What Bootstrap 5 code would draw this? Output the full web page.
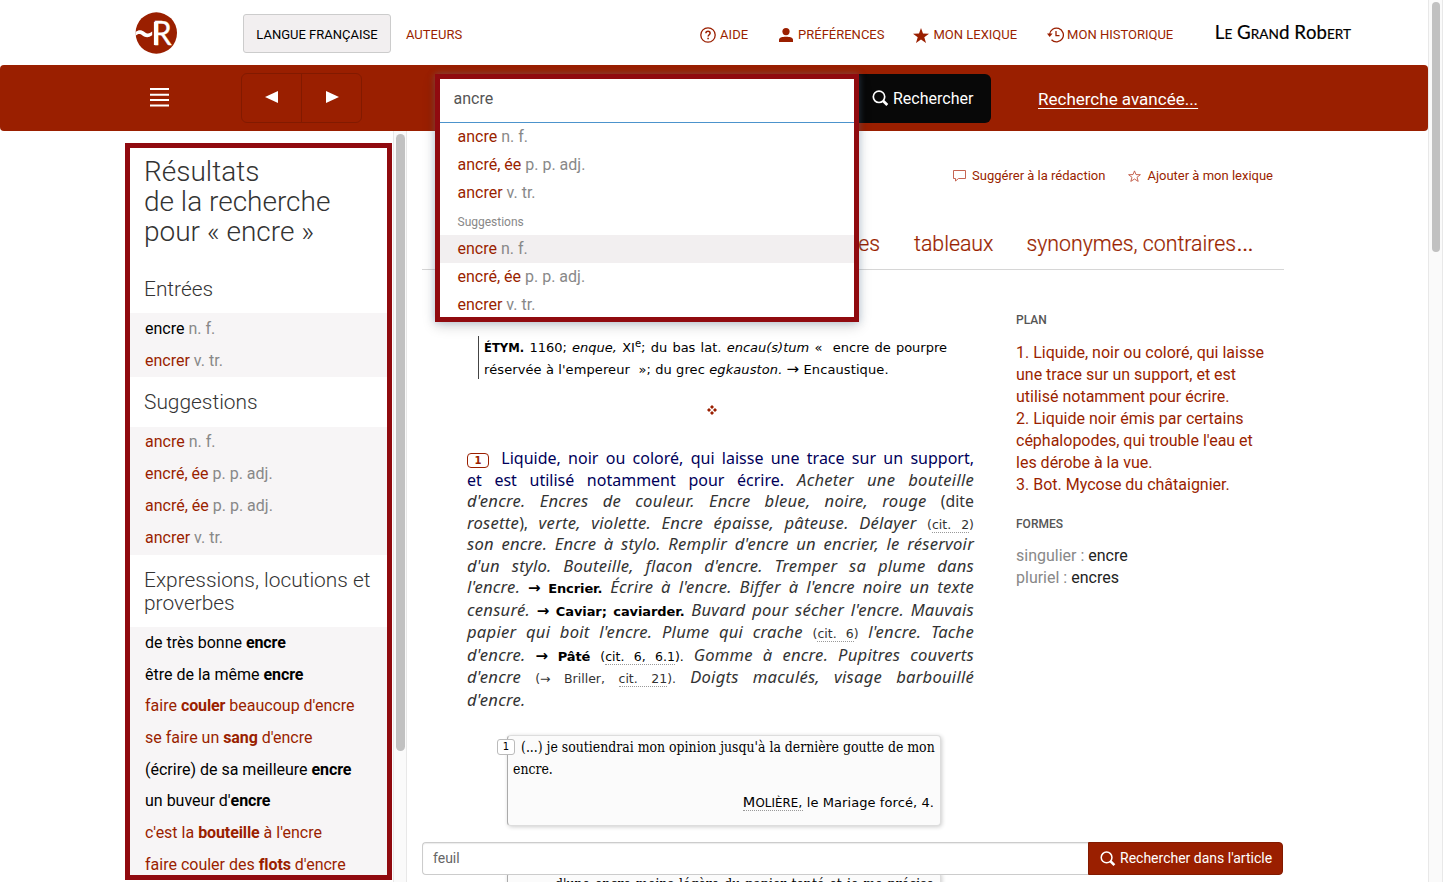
<!DOCTYPE html>
<html lang="fr">
<head>
<meta charset="utf-8">
<title>Le Grand Robert</title>
<link href="https://cdn.jsdelivr.net/npm/bootstrap@5.3.0/dist/css/bootstrap.min.css" rel="stylesheet">
<style>
:root{--brick:#9a1f00;--frame:#900a0f}
body{font-family:Roboto,sans-serif;font-size:16px;color:#000;height:100vh;overflow:hidden;background:#fff}
a,a:not([href]):not([class]),a:not([href]):not([class]):hover{color:var(--brick);text-decoration:none}
.gram{color:#888}
/* header */
.top{height:65px;padding-left:135px}
.logo{width:42px;height:42px;margin-top:12px}
.langbtn{margin:14px 0 0 66px;width:148px;height:39px;line-height:39px;font-size:13px;border:1px solid #ccc;border-radius:3px;background:#f2eff0;text-align:center}
.toplink{font-size:13px;line-height:20px;margin-top:25px;white-space:nowrap}
.toplink svg{flex:none}
.brandname{font-family:Lato,sans-serif;font-size:18.8px;line-height:24px;margin-top:20px;white-space:nowrap;-webkit-text-stroke:.2px #000}
.brandname i{font-style:normal;font-size:13.6px}
/* search bar */
.bar{height:66px;background:var(--brick);border-radius:4px}
.burger{width:19px;height:19px;margin:23px 0 0 150px}
.hist{margin:8px 0 0 72px;width:121px;height:50px;border:1px solid #821a00;border-radius:6px}
.hist div{width:59px;color:#fff;display:flex;justify-content:center;align-items:center;padding-bottom:2px}
.hist div+div{width:60px;border-left:1px solid #821a00;padding-left:2px}
.finder{margin:9px 0 0 73px;width:424px;height:49px;z-index:5}
.dropbox{top:0;left:0;width:424px;height:248px;border:5px solid var(--frame);background:#fff;box-shadow:0 4px 12px rgba(0,0,0,.18),0 0 7px rgba(110,160,210,.35)}
.dropbox .query{height:44px;border-bottom:1px solid #4c93cc;padding-left:13.5px;line-height:39px;color:#555}
.dropbox .opt{height:28px;line-height:28px;padding-left:17.5px}
.dropbox .on{background:#f2eff0}
.dropbox .grp{font-size:12px;color:#888;height:28px;line-height:31px;padding-left:17.5px}
.gobtn{margin-top:9px;width:132px;height:49px;background:#080808;color:#fff;border-radius:0 6px 6px 0;padding-left:13px}
a.adv:not([href]){color:#fff;text-decoration:underline;text-underline-offset:3px;margin:22px 0 0 47px;line-height:24px;font-size:17px}
/* sidebar */
.side{margin:12px 0 0 125px;width:267px;height:737px;border:5px solid var(--frame);overflow:hidden}
.side h1{font-weight:300;font-size:28px;line-height:30px;margin:9px 0 0 14px;color:#333}
.side h2{font-weight:300;font-size:20.9px;line-height:23px;margin:0;padding:14px 0 13px 14px;color:#333}
.side .zone{background:#f7f5f6;padding-left:15px}
.side .zone div{height:32px;line-height:31px;white-space:nowrap}
.side .mid div{line-height:29px}
.side .idioms div{height:31.7px}
.side .zone b{letter-spacing:-.1px}
.track{background:#fafafa;border-left:1px solid #e8e8e8;border-right:1px solid #e8e8e8}
.track span{display:block;background:#c1c1c1;border-radius:5px}
.t1{width:14px;margin-left:1px;padding:3px 2px 0 2px}.t1 span{width:9px;height:617px}
.t2{width:15px;height:100vh;padding:2px 0 0 3px}.t2 span{width:8px;height:250px}
/* article */
.art{margin-left:15px;width:862px}
.acts{height:24px;margin-top:33px;padding-right:11px;font-size:13px;line-height:24px}
.tabs{height:44px;margin-top:38px;padding-right:30px;border-bottom:1px solid #d6d6d6;font-size:21.3px;line-height:36px;font-weight:300}
.tabs a{-webkit-text-stroke:.2px var(--brick)}
.main{width:507px;margin-left:45px;font-family:"Noto Sans",sans-serif}
.etym{margin:66px 0 0 11px;height:43px;border-left:1px solid #444;padding:1px 0 0 5px;font-family:"DejaVu Sans",sans-serif;font-size:13px;line-height:22px;white-space:nowrap}
.etym div{width:463px}
.etym b{font-size:11.6px}
.etym sup{font-size:10px;line-height:0}
.arr{font-size:15px;line-height:0}
.j{text-align:justify;text-align-last:justify;white-space:nowrap}
.def{margin-top:28px;font-size:16.6px;letter-spacing:.25px;color:#333;font-style:italic}
.def .j,.def .last{height:21.5px;line-height:22px;white-space:nowrap}
.def .j:nth-child(n+7){height:22.5px}
.def u{text-decoration:none;font-style:normal;font-size:15.8px;letter-spacing:0}
.def .navy{color:#00005a;font-style:normal;font-size:16px;letter-spacing:0}
.def .ref{font-family:"DejaVu Sans",sans-serif;font-style:normal;font-size:12.5px;letter-spacing:0}
.def b{font-family:"DejaVu Sans",sans-serif;font-style:normal;font-size:13px;color:#000;letter-spacing:-.1px}
.dot{border-bottom:1px dotted #999}
.num{display:inline-block;width:22px;height:15px;border:1px solid var(--brick);border-radius:4px;color:var(--brick);font:bold 10px/13px "DejaVu Sans",sans-serif;text-align:center;vertical-align:0;margin-right:5px;text-align-last:center}
.cite{margin:25px 0 0 40px;width:434px;height:91px;background:#fbfbfb;border:1px solid #ddd;border-left-color:#aaa;border-radius:4px;box-shadow:1px 1px 4px rgba(0,0,0,.2);padding:0 6px 0 5px;font-family:"DejaVu Serif Condensed","DejaVu Serif",serif;font-stretch:condensed;font-size:13.9px;line-height:22px}
.cite .no{left:-11px;top:3px;width:18px;height:16px;border:1px solid #bbb;border-radius:3px;background:#fff;font:10px/14px "DejaVu Sans",sans-serif;text-align:center}
.auth{font-family:"DejaVu Sans",sans-serif;font-stretch:normal;font-size:13px;letter-spacing:.08px;margin-top:11px}
.plan{margin-left:42px;margin-top:40px;width:260px;line-height:22px}
.plan h3{font-size:12px;font-weight:500;line-height:20px;margin:0;color:#555}
.find{left:422px;bottom:7px;width:861px;height:33px;z-index:4}
.find .field{border:1px solid #ccc;border-right:0;border-radius:4px 0 0 4px;background:#fff;padding-left:10px;font-size:14px;line-height:31px;color:#666;box-shadow:inset 0 1px 1px rgba(0,0,0,.08)}
.find .go{width:195px;background:var(--brick);border:1px solid #821a00;color:#fff;font-size:14px;border-radius:0 4px 4px 0;padding-left:11px}
</style>
</head>
<body>
<div class="d-flex">
<div class="page flex-grow-1 d-flex flex-column vh-100 position-relative overflow-hidden">
  <header class="top d-flex align-items-start flex-shrink-0">
    <svg class="logo" viewBox="0 0 42 42"><circle cx="21.3" cy="21" r="20.7" fill="#9a1f00"/><path d="M.6 20C3.500 17.600 6.500 17.800 9.500 19.900S14 22 17.200 19.500V23.300C13.500 26 10.500 25.700 7.500 23.500S3 22 .6 23.700Z" fill="#fff"/><text x="17.300" y="33" font-family="Lato,sans-serif" font-weight="400" font-size="32" textLength="19.500" lengthAdjust="spacingAndGlyphs" fill="#fff" stroke="#fff" stroke-width=".3">R</text><path d="M20.800 10V33" stroke="#fff" stroke-width="3.800"/></svg>
    <div class="langbtn">LANGUE FRANÇAISE</div>
    <a class="toplink" style="margin-left:15px">AUTEURS</a>
    <a class="toplink d-flex align-items-center" style="margin-left:238px"><svg width="16" height="16" viewBox="0 0 16 16" fill="none" stroke="#9a1f00" stroke-width="1.300"><circle cx="8" cy="8" r="7.200"/><path d="M5.900 6.200C5.900 3.500 10.200 3.500 10.100 6.200 10.100 7.700 8.100 7.800 8.100 9.600" stroke-width="1.500"/><path d="M8.100 10.800v1.500" stroke-width="1.600"/></svg><span style="margin-left:4px">AIDE</span></a>
    <a class="toplink d-flex align-items-center" style="margin-left:31px"><svg width="14" height="14" viewBox="0 0 14 14" fill="#9a1f00"><circle cx="7" cy="3.600" r="3.600"/><path d="M0 14V12C0 9.500 3 8.800 7 8.800S14 9.500 14 12V14Z"/></svg><span style="margin-left:5px">PRÉFÉRENCES</span></a>
    <a class="toplink d-flex align-items-center" style="margin-left:29px"><svg width="16" height="15" viewBox="0 0 16 15" fill="#9a1f00"><path d="M8 0 10 5.400 16 5.700 11.300 9.200 13 15 8 11.600 3 15 4.700 9.200 0 5.700 6 5.400Z"/></svg><span style="margin-left:4px">MON LEXIQUE</span></a>
    <a class="toplink d-flex align-items-center" style="margin-left:30px"><svg width="17" height="16" viewBox="0 0 17 16" fill="none" stroke="#9a1f00" stroke-width="1.300"><path d="M2.600 7.500A6.900 6.900 0 1 1 4.500 12.800"/><path d="M9 4V8.700H12.500"/><path d="M0 6.500H5.600L2.700 10Z" fill="#9a1f00" stroke="none"/></svg><span style="margin-left:3px">MON HISTORIQUE</span></a>
    <div class="brandname" style="margin-left:41.500px">L<i>E</i> G<i>RAN</i>d R<i style="font-size:18.500px">ob</i><i>ERT</i></div>
  </header>

  <div class="bar d-flex align-items-start flex-shrink-0">
    <svg class="burger" viewBox="0 0 19 19"><path d="M0 1H19M0 6.700H19M0 12H19M0 17.500H19" stroke="#fff" stroke-width="2"/></svg>
    <div class="hist d-flex">
      <div><svg width="13" height="12"><path d="M13 0V12L0 6Z" fill="#fff"/></svg></div>
      <div><svg width="13" height="12"><path d="M0 0V12L13 6Z" fill="#fff"/></svg></div>
    </div>
    <div class="finder position-relative">
      <div class="dropbox position-absolute">
        <div class="query">ancre</div>
        <div class="opt"><a>ancre</a> <span class="gram">n. f.</span></div>
        <div class="opt"><a>ancré, ée</a> <span class="gram">p. p. adj.</span></div>
        <div class="opt"><a>ancrer</a> <span class="gram">v. tr.</span></div>
        <div class="grp">Suggestions</div>
        <div class="opt on"><a>encre</a> <span class="gram">n. f.</span></div>
        <div class="opt"><a>encré, ée</a> <span class="gram">p. p. adj.</span></div>
        <div class="opt"><a>encrer</a> <span class="gram">v. tr.</span></div>
      </div>
    </div>
    <div class="gobtn d-flex align-items-center"><svg width="17" height="17" viewBox="0 0 17 17" fill="none" stroke="#fff"><circle cx="7" cy="6.800" r="5.700" stroke-width="1.700"/><path d="M11 10.800 15.300 15" stroke-width="2.800"/></svg><span style="margin-left:4px">Rechercher</span></div>
    <a class="adv">Recherche avancée...</a>
  </div>

  <div class="d-flex align-items-stretch flex-grow-1">
    <aside class="side flex-shrink-0">
      <h1>Résultats<br>de la recherche<br>pour « encre »</h1>
      <h2 style="padding-top:31px;padding-bottom:12px">Entrées</h2>
      <div class="zone"><div>encre <span class="gram">n. f.</span></div><div><a>encrer</a> <span class="gram">v. tr.</span></div></div>
      <h2>Suggestions</h2>
      <div class="zone mid">
        <div><a>ancre</a> <span class="gram">n. f.</span></div>
        <div><a>encré, ée</a> <span class="gram">p. p. adj.</span></div>
        <div><a>ancré, ée</a> <span class="gram">p. p. adj.</span></div>
        <div><a>ancrer</a> <span class="gram">v. tr.</span></div>
      </div>
      <h2 style="padding-bottom:12px">Expressions, locutions et proverbes</h2>
      <div class="zone idioms">
        <div>de très bonne <b>encre</b></div>
        <div>être de la même <b>encre</b></div>
        <div><a>faire <b>couler</b> beaucoup d'encre</a></div>
        <div><a>se faire un <b>sang</b> d'encre</a></div>
        <div>(écrire) de sa meilleure <b>encre</b></div>
        <div>un buveur d'<b>encre</b></div>
        <div><a>c'est la <b>bouteille</b> à l'encre</a></div>
        <div><a>faire couler des <b>flots</b> d'encre</a></div>
      </div>
    </aside>
    <div class="track t1 flex-shrink-0"><span></span></div>

    <section class="art flex-shrink-0">
      <div class="acts d-flex justify-content-end align-items-center">
        <svg width="13" height="12" viewBox="0 0 13 12" fill="none" stroke="#c0533f" stroke-width=".9"><path d="M.5.500H12.500V8.500H5.500L2.500 11V8.500H.5Z"/></svg><a style="margin-left:6px">Suggérer à la rédaction</a>
        <svg style="margin-left:23px" width="13" height="12" viewBox="0 0 13 12" fill="none" stroke="#c0533f" stroke-width=".9"><path d="M6.500.900 8 4.600 12.400 4.700 9 7.300 10.200 11.400 6.500 9 2.800 11.400 4 7.300.600 4.700 5 4.600Z"/></svg><a style="margin-left:6px">Ajouter à mon lexique</a>
      </div>
      <div class="tabs d-flex justify-content-end"><a>exemples</a><a style="margin-left:34px">tableaux</a><a style="margin-left:33px">synonymes, contraires<span style="font-size:28px;line-height:0">…</span></a></div>
      <div class="d-flex align-items-start">
        <div class="main flex-shrink-0">
          <div class="etym">
            <div class="j"><b>ÉTYM.</b> 1160; <em>enque,</em> XI<sup>e</sup>; du bas lat. <em>encau(s)tum</em> «&nbsp; encre de pourpre</div>
            <div style="letter-spacing:.1px">réservée à l'empereur&nbsp; »; du grec <em>egkauston.</em> <span class="arr">→</span> Encaustique.</div>
          </div>
          <div style="margin:26px 0 0 240px;height:14px;line-height:0"><svg width="10" height="10" viewBox="0 0 10 10" fill="#9a1f00"><path d="M5 0 7 2 5 4 3 2ZM5 6 7 8 5 10 3 8ZM2 3 4 5 2 7 0 5ZM8 3 10 5 8 7 6 5Z"/></svg></div>
          <div class="def">
            <div class="j navy"><span class="num">1</span> Liquide, noir ou coloré, qui laisse une trace sur un support,</div>
            <div class="j"><span class="navy">et est utilisé notamment pour écrire.</span> Acheter une bouteille</div>
            <div class="j">d'encre. Encres de couleur. Encre bleue, noire, rouge <u>(dite</u></div>
            <div class="j">rosette<u>),</u> verte, violette. Encre épaisse, pâteuse. Délayer <span class="ref">(<span class="dot">cit. 2</span>)</span></div>
            <div class="j">son encre. Encre à stylo. Remplir d'encre un encrier, le réservoir</div>
            <div class="j">d'un stylo. Bouteille, flacon d'encre. Tremper sa plume dans</div>
            <div class="j">l'encre. <b><span class="arr">→</span> Encrier.</b> Écrire à l'encre. Biffer à l'encre noire un texte</div>
            <div class="j">censuré. <b><span class="arr">→</span> Caviar; caviarder.</b> Buvard pour sécher l'encre. Mauvais</div>
            <div class="j">papier qui boit l'encre. Plume qui crache <span class="ref">(<span class="dot">cit. 6</span>)</span> l'encre. Tache</div>
            <div class="j">d'encre. <b><span class="arr">→</span> Pâté</b> <span class="ref" style="color:#000">(<span class="dot">cit. 6, 6.1</span>).</span> Gomme à encre. Pupitres couverts</div>
            <div class="j">d'encre <span class="ref">(→ Briller, <span class="dot">cit. 21</span>).</span> Doigts maculés, visage barbouillé</div>
            <div class="last">d'encre.</div>
          </div>
          <div class="cite position-relative">
            <span class="no position-absolute">1</span>
            <div class="j" style="padding-left:8px">(...) je soutiendrai mon opinion jusqu'à la dernière goutte de mon</div>
            <div>encre.</div>
            <div class="auth text-end"><span class="dot"><span style="font-size:14.500px">M</span><span style="font-size:11.800px">OLIÈRE</span>,</span> le Mariage forcé, 4.</div>
          </div>
          <div class="cite position-relative" style="margin-top:46px">
            <div class="j" style="padding-left:42px">d'une encre moins légère du papier tenté et je me précise</div>
          </div>
        </div>
        <div class="plan">
          <h3>PLAN</h3>
          <div style="margin-top:12px"><a>1. Liquide, noir ou coloré, qui laisse<br>une trace sur un support, et est<br>utilisé notamment pour écrire.<br>2. Liquide noir émis par certains<br>céphalopodes, qui trouble l'eau et<br>les dérobe à la vue.<br>3. Bot. Mycose du châtaignier.</a></div>
          <h3 style="margin-top:18px">FORMES</h3>
          <div style="margin-top:11px;color:#222"><span class="gram">singulier :</span> encre<br><span class="gram">pluriel :</span> encres</div>
        </div>
      </div>
    </section>
  </div>
  <div class="find position-absolute d-flex">
    <div class="field flex-grow-1">feuil</div>
    <div class="go d-flex align-items-center"><svg width="16" height="16" viewBox="0 0 17 17" fill="none" stroke="#fff"><circle cx="7" cy="6.800" r="5.700" stroke-width="1.600"/><path d="M11 10.800 15.300 15" stroke-width="2.800"/></svg><span style="margin-left:4px">Rechercher dans l'article</span></div>
  </div>
</div>
<div class="track t2 flex-shrink-0"><span></span></div>
</div>
<script src="https://cdn.jsdelivr.net/npm/bootstrap@5.3.0/dist/js/bootstrap.bundle.min.js"></script>
</body>
</html>
